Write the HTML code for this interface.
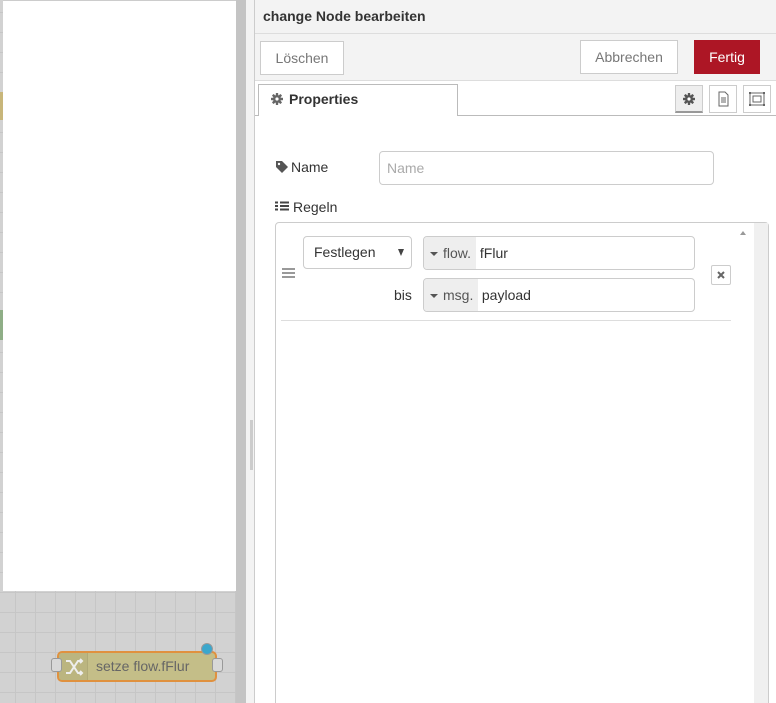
<!DOCTYPE html>
<html><head><style>
*{box-sizing:border-box;margin:0;padding:0}
html,body{width:776px;height:703px;overflow:hidden}
body{position:relative;font-family:"Liberation Sans",sans-serif;font-size:14px;color:#333;background:#d0d0d0}
.abs{position:absolute}
.canvas{left:0;top:0;width:246px;height:703px;background-color:#d2d2d2;background-image:linear-gradient(#c6c6c6 1px,transparent 1px),linear-gradient(90deg,#c6c6c6 1px,transparent 1px);background-size:20px 20px;background-position:15px 12px}
.btn{position:absolute;border:1px solid #ccc;background:#fff;color:#777;font-size:14px;text-align:center}
.car{display:inline-block;width:0;height:0;border-left:4px solid transparent;border-right:4px solid transparent;border-top:4px solid #555;vertical-align:middle;margin-right:5px}
</style></head><body>
<svg width="0" height="0" style="position:absolute"><defs><g id="gear"><g fill="currentColor"><rect x="4.8" y="0" width="2.4" height="12" rx="0.5"/><rect x="0" y="4.8" width="12" height="2.4" rx="0.5"/><rect x="4.8" y="0" width="2.4" height="12" rx="0.5" transform="rotate(45 6 6)"/><rect x="4.8" y="0" width="2.4" height="12" rx="0.5" transform="rotate(-45 6 6)"/><circle cx="6" cy="6" r="4"/></g><circle cx="6" cy="6" r="1.6" fill="#fff"/></g></defs></svg>
<div class="abs canvas"></div>
<div class="abs" style="left:0;top:92px;width:3px;height:28px;background:#c8b67a"></div>
<div class="abs" style="left:0;top:310px;width:3px;height:30px;background:#8fae87"></div>
<div class="abs" style="left:236px;top:0;width:10px;height:703px;background:#c4c4c4"></div>
<div class="abs" style="left:3px;top:0;width:233px;height:591px;background:#fff;border-top:1px solid #ccc"></div>
<div class="abs" style="left:57px;top:651px;width:160px;height:31px;background:#c4be88;border:2px solid #e0913f;border-radius:5px;overflow:hidden">
 <div class="abs" style="left:0;top:0;width:29px;height:27px;background:#bbb580;border-right:1px solid #b0aa78"></div>
 <svg class="abs" style="left:4px;top:3px" width="22" height="22"><path d="M3 5h4l8 12h4M3 17h4l8-12h4M17 3l2 2-2 2M17 15l2 2-2 2" fill="none" stroke="#eee" stroke-width="2"/></svg>
 <div class="abs" style="left:37px;top:5px;color:#666;font-size:14px">setze flow.fFlur</div>
</div>
<div class="abs" style="left:51px;top:658px;width:11px;height:14px;background:#d8d8d8;border:1px solid #999;border-radius:3px"></div>
<div class="abs" style="left:212px;top:658px;width:11px;height:14px;background:#d8d8d8;border:1px solid #999;border-radius:3px"></div>
<div class="abs" style="left:201px;top:643px;width:12px;height:12px;background:#3ba7cc;border:1px solid #999;border-radius:50%"></div>
<div class="abs" style="left:246px;top:0;width:530px;height:703px;background:#f3f3f3"></div>
<div class="abs" style="left:250px;top:420px;width:3px;height:50px;background:#ccc"></div>
<div class="abs" style="left:254px;top:0;width:522px;height:703px;background:#f3f3f3;border-left:1px solid #ccc"></div>
<div class="abs" style="left:263px;top:8px;font-weight:bold;font-size:14px;color:#333">change Node bearbeiten</div>
<div class="abs" style="left:255px;top:33px;width:521px;height:1px;background:#ddd"></div>
<div class="btn" style="left:260px;top:41px;width:84px;height:34px;line-height:32px">Löschen</div>
<div class="btn" style="left:580px;top:40px;width:98px;height:34px;line-height:32px">Abbrechen</div>
<div class="btn" style="left:694px;top:40px;width:66px;height:34px;line-height:34px;background:#ad1625;border:none;color:#fff">Fertig</div>
<div class="abs" style="left:255px;top:80px;width:521px;height:1px;background:#ddd"></div>
<div class="abs" style="left:255px;top:81px;width:521px;height:622px;background:#fff"></div>
<div class="abs" style="left:255px;top:115px;width:521px;height:1px;background:#bbb"></div>
<div class="abs" style="left:258px;top:84px;width:200px;height:32px;background:#fff;border:1px solid #bbb;border-bottom:none"></div>
<svg class="abs" style="left:271px;top:93px;color:#666" width="12" height="12"><use href="#gear"/></svg>
<div class="abs" style="left:289px;top:91px;font-weight:bold;font-size:14px;color:#333">Properties</div>
<div class="abs" style="left:675px;top:85px;width:28px;height:28px;background:#eee;border:1px solid #ccc;border-bottom:2px solid #999"><svg class="abs" style="left:7px;top:7px;color:#555" width="12" height="12"><use href="#gear"/></svg></div>
<div class="abs" style="left:709px;top:85px;width:28px;height:28px;background:#fff;border:1px solid #ccc"><svg width="26" height="26"><path d="M9 6h6l3 3v11H9z" fill="none" stroke="#666"/><path d="M11 12h5M11 14h5M11 16h5" stroke="#666"/></svg></div>
<div class="abs" style="left:743px;top:85px;width:28px;height:28px;background:#fff;border:1px solid #ccc"><svg width="26" height="26"><rect x="6" y="7" width="14" height="12" fill="none" stroke="#666"/><rect x="9" y="10" width="8" height="6" fill="none" stroke="#666"/><rect x="5" y="6" width="2" height="2" fill="#666"/><rect x="19" y="6" width="2" height="2" fill="#666"/><rect x="5" y="18" width="2" height="2" fill="#666"/><rect x="19" y="18" width="2" height="2" fill="#666"/></svg></div>
<svg class="abs" style="left:275px;top:160px" width="14" height="14"><path d="M1 1h6l6 6-6 6-6-6z" fill="#555"/><circle cx="4" cy="4" r="1.2" fill="#fff"/></svg>
<div class="abs" style="left:291px;top:159px;font-size:14px;color:#333">Name</div>
<div class="abs" style="left:379px;top:151px;width:335px;height:34px;border:1px solid #ccc;border-radius:4px;padding-left:7px;line-height:32px;color:#aaa">Name</div>
<svg class="abs" style="left:275px;top:201px" width="14" height="12"><path d="M0 1.5h3M5 1.5h9M0 5h3M5 5h9M0 8.5h3M5 8.5h9" stroke="#444" stroke-width="2"/></svg>
<div class="abs" style="left:293px;top:199px;font-size:14px;color:#333">Regeln</div>
<div class="abs" style="left:275px;top:222px;width:494px;height:490px;border:1px solid #ccc;border-radius:4px"></div>
<div class="abs" style="left:754px;top:223px;width:14px;height:480px;background:#f0f0f0"></div>
<div class="abs" style="left:740px;top:231px;width:0;height:0;border-left:3px solid transparent;border-right:3px solid transparent;border-bottom:4px solid #999"></div>
<svg class="abs" style="left:282px;top:268px" width="13" height="10"><path d="M0 1h13M0 5h13M0 9h13" stroke="#999" stroke-width="2"/></svg>
<div class="abs" style="left:303px;top:236px;width:109px;height:33px;border:1px solid #ccc;border-radius:4px;padding-left:10px;line-height:31px">Festlegen<span style="position:absolute;right:7px;top:12px;width:0;height:0;border-left:3.5px solid transparent;border-right:3.5px solid transparent;border-top:7px solid #444"></span></div>
<div class="abs" style="left:423px;top:236px;width:272px;height:34px;border:1px solid #ccc;border-radius:4px;overflow:hidden;line-height:32px"><span style="display:inline-block;width:52px;background:#eee;color:#555;padding-left:6px"><span class="car"></span>flow.</span> fFlur</div>
<div class="abs" style="left:394px;top:287px">bis</div>
<div class="abs" style="left:423px;top:278px;width:272px;height:34px;border:1px solid #ccc;border-radius:4px;overflow:hidden;line-height:32px"><span style="display:inline-block;width:54px;background:#eee;color:#555;padding-left:6px"><span class="car"></span>msg.</span> payload</div>
<div class="abs" style="left:711px;top:265px;width:20px;height:20px;border:1px solid #ccc;border-radius:2px"><svg class="abs" style="left:5px;top:5px" width="8" height="8"><path d="M1 1l6 6M7 1l-6 6" stroke="#666" stroke-width="2"/></svg></div>
<div class="abs" style="left:281px;top:320px;width:450px;height:1px;background:#ddd"></div>
</body></html>
